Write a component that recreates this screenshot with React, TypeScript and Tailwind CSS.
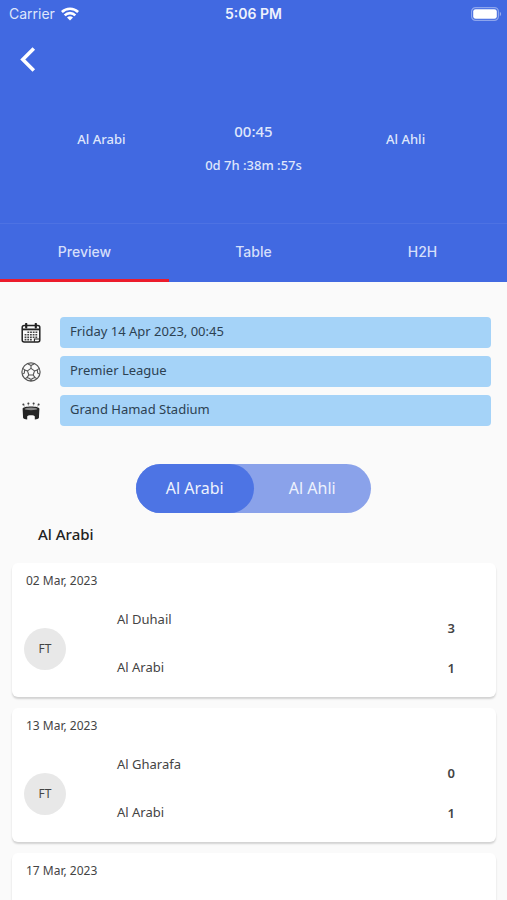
import { useState, type ReactNode } from "react";

type Match = {
  date: string;
  status: string;
  home: string;
  away: string;
  homeScore: number;
  awayScore: number;
};

const matches: Match[] = [
  { date: "02 Mar, 2023", status: "FT", home: "Al Duhail", away: "Al Arabi", homeScore: 3, awayScore: 1 },
  { date: "13 Mar, 2023", status: "FT", home: "Al Gharafa", away: "Al Arabi", homeScore: 0, awayScore: 1 },
  { date: "17 Mar, 2023", status: "FT", home: "", away: "", homeScore: 0, awayScore: 0 },
];

const tabs = ["Preview", "Table", "H2H"];
const teams = ["Al Arabi", "Al Ahli"];

function WifiIcon() {
  return (
    <svg viewBox="0 0 18 14" className="h-3.5 w-[18px]" fill="none" stroke="#fff" strokeWidth="2.6" aria-hidden="true">
      <path d="M0.9 5a11.6 11.6 0 0 1 16.2 0" />
      <path d="M3.7 8.3a7.5 7.5 0 0 1 10.6 0" />
      <path d="M9 13.6 6 10.6a4.3 4.3 0 0 1 6 0z" fill="#fff" stroke="none" />
    </svg>
  );
}

function BatteryIcon() {
  return (
    <svg viewBox="0 0 31 14" className="h-3.5 w-[31px]" aria-hidden="true">
      <rect x="0.6" y="0.6" width="26.8" height="12.8" rx="4" fill="none" stroke="#fff" strokeOpacity="0.4" strokeWidth="1.2" />
      <rect x="2.2" y="2.2" width="23.6" height="9.6" rx="2.4" fill="#fff" />
      <path d="M28.8 4.8a2.5 2.5 0 0 1 0 4.4z" fill="#fff" fillOpacity="0.45" />
    </svg>
  );
}

function CalendarIcon() {
  return (
    <svg viewBox="0 0 20 20" className="size-5" fill="none" stroke="#222" aria-hidden="true">
      <rect x="1.2" y="2.4" width="17.6" height="16.6" rx="2" strokeWidth="1.5" />
      <path d="M1.2 6.4h17.6" strokeWidth="1.8" />
      <path d="M5.2 0.9v3.6M14.8 0.9v3.6" strokeWidth="2.2" strokeLinecap="round" />
      <path d="M6.4 9.3h10.2M3.6 11.8h13M3.6 14.3h13M3.6 16.6h7.6" stroke="#444" strokeWidth="1.6" strokeDasharray="1.8 0.9" />
      <path d="M13.4 18.8v-2.8h5.2" strokeWidth="1.1" />
    </svg>
  );
}

function BallIcon() {
  return (
    <svg viewBox="0 0 20 20" className="size-5" fill="none" stroke="#555" strokeWidth="1.1" strokeLinejoin="round" aria-hidden="true">
      <circle cx="10" cy="10" r="9.1" strokeWidth="1.2" />
      <path d="M10 6.4l3.5 2.5-1.3 4.1H7.8L6.5 8.9z" />
      <path d="M10 6.4V3.6M13.5 8.9l2.8-1M12.2 13l1.7 2.4M7.8 13l-1.7 2.4M6.5 8.9l-2.8-1" />
      <path d="M6.6 1.8 10 3.6l3.4-1.8M18.3 6.4l-2 1.5.4 3.2 2.1 1.3M15.9 16.7l-2-1.3-3.1 1.4-.2 2.2M4.1 16.7l2-1.3 3.1 1.4.2 2.2M1.7 6.4l2 1.5-.4 3.2-2.1 1.3" />
    </svg>
  );
}

function StadiumIcon() {
  return (
    <svg viewBox="0 0 20 20" className="size-5" aria-hidden="true">
      <path d="M1.6 7.8c0-3.2 16.8-3.2 16.8 0l-.5 9.2c-.6.8-2 1.3-4.1 1.6v-3.2c0-1.6-7.6-1.6-7.6 0v3.2c-2.1-.3-3.5-.8-4.1-1.6z" fill="#242424" />
      <ellipse cx="10" cy="7.9" rx="6.4" ry="1.3" fill="#8a8a8a" />
      <g fill="#333">
        <circle cx="2.4" cy="3.4" r="1" />
        <circle cx="7.4" cy="2.4" r="1" />
        <circle cx="12.6" cy="2.4" r="1" />
        <circle cx="17.6" cy="3.4" r="1" />
      </g>
      <path d="M2.6 3.6l1 2M17.4 3.6l-1 2M7.4 2.6v2M12.6 2.6v2" stroke="#777" strokeWidth="0.6" />
    </svg>
  );
}

function InfoRow({ icon, children }: { icon: ReactNode; children: ReactNode }) {
  return (
    <li className="flex items-center gap-[19px]">
      {icon}
      <p className="h-[31px] flex-1 rounded bg-[#a5d3f8] px-2.5 text-[13px] leading-7 text-[#2c4152]">{children}</p>
    </li>
  );
}

function MatchCard({ match }: { match: Match }) {
  return (
    <article className="h-[134px] rounded-md bg-white pt-2 text-[13px] leading-5 text-[#444] shadow-[0_2px_2px_rgba(0,0,0,0.16)]">
      <time className="block px-3.5 text-xs leading-5">{match.date}</time>
      {match.home && (
        <div className="flex pt-[18px] pl-3">
          <div className="mt-[19px] flex size-[42px] items-center justify-center rounded-full bg-[#e8e8e8] text-xs">
            {match.status}
          </div>
          <div className="ml-[51px] flex flex-1 flex-col gap-7">
            <span>{match.home}</span>
            <span>{match.away}</span>
          </div>
          <div className="mt-[9px] mr-[41px] flex flex-col gap-5 text-center font-semibold">
            <span>{match.homeScore}</span>
            <span>{match.awayScore}</span>
          </div>
        </div>
      )}
    </article>
  );
}

export default function App() {
  const [tab, setTab] = useState(0);
  const [team, setTeam] = useState(0);

  return (
    <div className="flex h-screen flex-col overflow-hidden bg-[#fafafa] font-['Noto_Sans',sans-serif]">
      <header className="bg-[#4169e1] text-white">
        <div className="grid h-7 grid-cols-3 items-center px-[9px] font-['Inter',sans-serif] text-sm text-[#dfe6fb]">
          <div className="flex items-center gap-1.5">
            <span>Carrier</span>
            <WifiIcon />
          </div>
          <span className="text-center text-sm font-semibold text-[#eef2fd]">5:06 PM</span>
          <div className="-mr-1 flex justify-end">
            <BatteryIcon />
          </div>
        </div>
        <button type="button" aria-label="Back" className="mt-[18px] ml-5 block">
          <svg viewBox="0 0 16 26" className="h-[26px] w-4" fill="none" stroke="#fff" strokeWidth="3.6" aria-hidden="true">
            <path d="M13.8 2.4 2.8 13.4l11 11" />
          </svg>
        </button>
        <div className="grid h-[151px] grid-cols-[2fr_1fr_2fr] pt-[47px] text-center text-[13px] leading-6 font-medium text-[#dfe6fb]">
          <span className="pt-2">Al Arabi</span>
          <div className="flex flex-col items-center gap-2.5 whitespace-nowrap">
            <span className="text-[15px] leading-6">00:45</span>
            <span>0d 7h :38m :57s</span>
          </div>
          <span className="pt-2">Al Ahli</span>
        </div>
        <nav className="grid h-[59px] grid-cols-3 border-t border-[#4d72e3] font-['Inter',sans-serif]">
          {tabs.map((name, i) => (
            <button
              key={name}
              type="button"
              onClick={() => setTab(i)}
              className={`border-b-3 text-sm font-medium text-[#d5dffa] ${tab === i ? "border-[#ec1c2c]" : "border-transparent"}`}
            >
              {name}
            </button>
          ))}
        </nav>
      </header>

      <main className="min-h-0 flex-1 overflow-hidden">
        <ul className="flex flex-col gap-2 pt-[35px] pr-4 pl-[21px]">
          <InfoRow icon={<CalendarIcon />}>Friday 14 Apr 2023, 00:45</InfoRow>
          <InfoRow icon={<BallIcon />}>Premier League</InfoRow>
          <InfoRow icon={<StadiumIcon />}>Grand Hamad Stadium</InfoRow>
        </ul>

        <div className="mx-auto mt-[38px] grid h-[49px] w-[235px] grid-cols-2 rounded-full bg-[#8aa2ea]">
          {teams.map((name, i) => (
            <button
              key={name}
              type="button"
              onClick={() => setTeam(i)}
              className={`rounded-full pb-0.5 text-base text-[#eef2fd] ${team === i ? "bg-[#4d74e4]" : ""}`}
            >
              {name}
            </button>
          ))}
        </div>

        <h2 className="mt-[9px] ml-[38px] text-[15px] leading-6 font-medium text-[#222]">{teams[team]}</h2>

        <div className="mt-[17px] flex flex-col gap-[11px] pr-[11px] pl-3">
          {matches.map((m) => (
            <MatchCard key={m.date} match={m} />
          ))}
        </div>
      </main>
    </div>
  );
}
